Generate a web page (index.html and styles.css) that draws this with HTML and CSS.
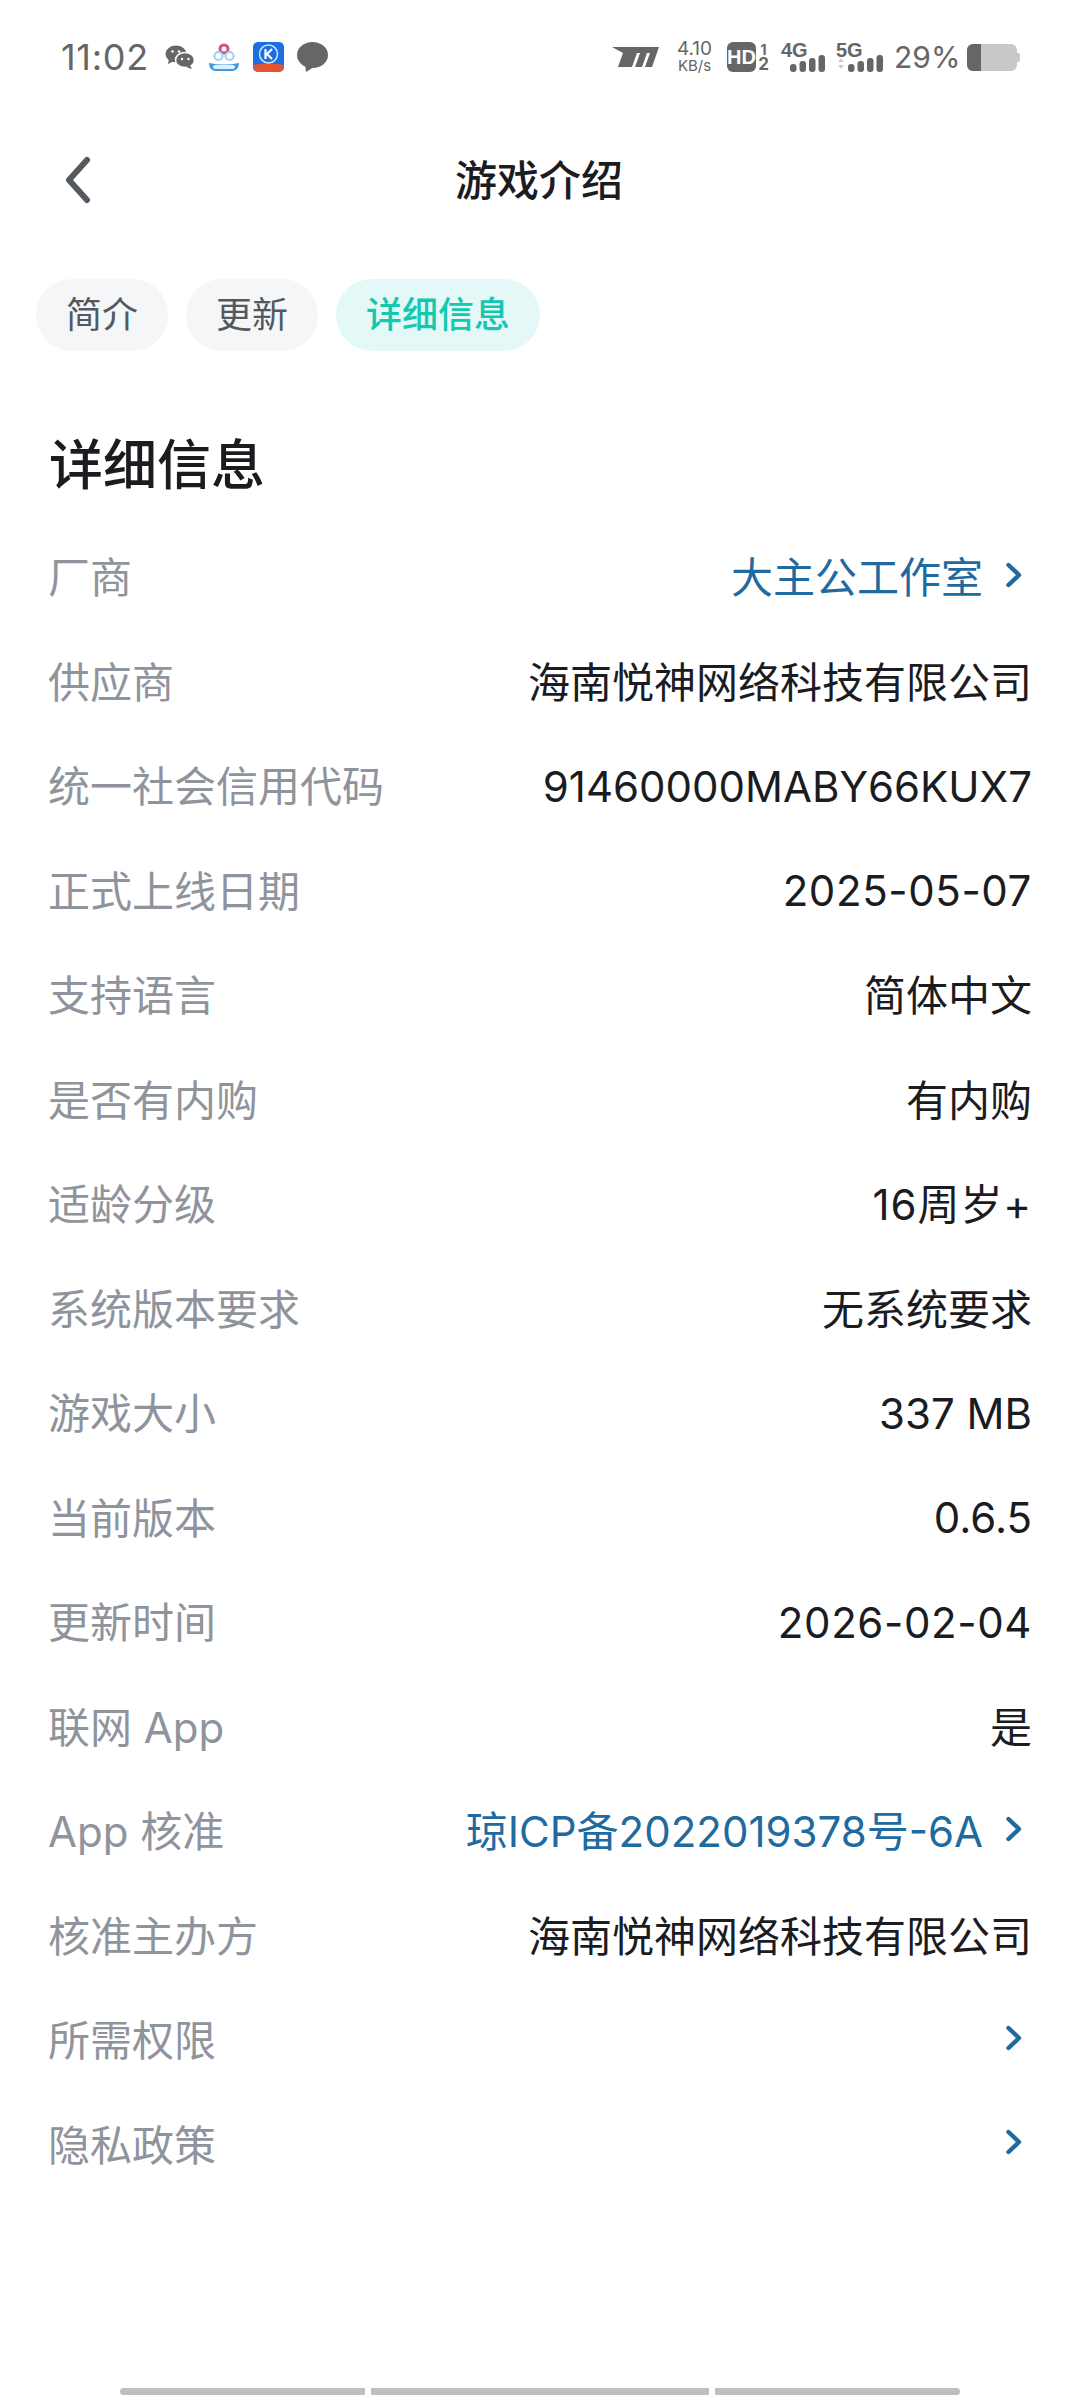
FILE: index.html
```html
<!DOCTYPE html>
<html lang="zh-CN">
<head>
<meta charset="utf-8">
<title>游戏介绍</title>
<link rel="stylesheet" href="styles.css">
</head>
<body>
<div class="screen">
  <div class="status">
    <div class="status-left">
      <span class="time">11:02</span>
      <svg class="ic-wechat" viewBox="0 0 30 24" width="30" height="24"><ellipse cx="11" cy="9" rx="10.500" ry="8.500" fill="#666"/><path d="M4 14l-1 5 6-3z" fill="#666"/><ellipse cx="20" cy="15" rx="9.500" ry="7.500" fill="#666" stroke="#fff" stroke-width="1.500"/><path d="M25 20l2 4-6-2z" fill="#666"/><circle cx="7.500" cy="6.500" r="1.300" fill="#fff"/><circle cx="14" cy="6.500" r="1.300" fill="#fff"/><circle cx="17" cy="14" r="1.200" fill="#fff"/><circle cx="23.500" cy="14" r="1.200" fill="#fff"/></svg>
      <svg class="ic-omni" viewBox="0 0 32 28" width="32" height="28"><circle cx="16" cy="6" r="4" fill="none" stroke="#d64a93" stroke-width="3"/><circle cx="10.500" cy="13" r="4" fill="none" stroke="#9cd3ee" stroke-width="2"/><circle cx="21.500" cy="13" r="4" fill="none" stroke="#9cd3ee" stroke-width="2"/><path d="M1 20q15 3 30 0c0 5-3 8-7 8H8c-4 0-7-3-7-8z" fill="#3b9be0"/><rect x="5" y="22" width="22" height="4" rx="2" fill="#dff0fb"/></svg>
      <svg class="ic-k" viewBox="0 0 31 30" width="31" height="30"><rect width="31" height="30" rx="5" fill="#1b6fe0"/><path d="M0 23q15.500 -3 31 0v2a5 5 0 0 1-5 5H5a5 5 0 0 1-5-5z" fill="#e2552f"/><circle cx="15.500" cy="12" r="9" fill="none" stroke="#cfe3fb" stroke-width="1.500"/><path d="M12.500 7v10M19 7l-5 5 5 5" fill="none" stroke="#fff" stroke-width="2.200"/></svg>
      <svg class="ic-bubble" viewBox="0 0 31 30" width="31" height="30"><ellipse cx="15.500" cy="13" rx="15.500" ry="13" fill="#666"/><path d="M8 22l1 8 8-5z" fill="#666"/></svg>
    </div>
    <div class="status-right">
      <svg class="ic-m" viewBox="0 0 47 20" width="47" height="20"><path d="M0 0h47l-7 20h-7l5-14h-3l-5 14h-7l5-14h-3l-5 14H6l5-14z" fill="#666"/></svg>
      <div class="speed"><span class="speed-num">4.10</span><span class="speed-unit">KB/s</span></div>
      <div class="hd"><span class="hd-box">HD</span><span class="hd-nums"><span>1</span><span class="hd-two">2</span></span></div>
      <div class="net net-4g">
        <span class="net-label">4G</span>
        <svg viewBox="0 0 35 17" width="35" height="17"><rect x="0" y="9" width="6.500" height="8" rx="3" fill="#666"/><rect x="9.500" y="6" width="6.500" height="11" rx="3" fill="#666"/><rect x="19" y="3" width="6.500" height="14" rx="3" fill="#666"/><rect x="28.500" y="0" width="6.500" height="17" rx="3" fill="#666"/></svg>
      </div>
      <div class="net net-5g">
        <span class="net-label">5G</span>
        <svg viewBox="0 0 45 17" width="45" height="17"><path d="M0 7l3-4 3 4zM0 10l3 4 3-4z" fill="#ccc"/><rect x="10" y="9" width="6.500" height="8" rx="3" fill="#666"/><rect x="19.500" y="6" width="6.500" height="11" rx="3" fill="#666"/><rect x="29" y="3" width="6.500" height="14" rx="3" fill="#666"/><rect x="38.500" y="0" width="6.500" height="17" rx="3" fill="#666"/></svg>
      </div>
      <span class="pct">29%</span>
      <svg class="ic-batt" viewBox="0 0 53 27" width="53" height="27"><path d="M49 9h2a2 2 0 0 1 2 2v5a2 2 0 0 1-2 2h-2z" fill="#c8c8c8"/><rect width="50" height="27" rx="6" fill="#c8c8c8"/><path d="M6 0h8v27H6a6 6 0 0 1-6-6V6a6 6 0 0 1 6-6z" fill="#666"/></svg>
    </div>
  </div>

  <header class="nav">
    <svg class="back" viewBox="0 0 30 48" width="30" height="48"><path d="M24 4L6 24l18 20" fill="none" stroke="#54585f" stroke-width="6" stroke-linecap="round" stroke-linejoin="round"/></svg>
    <h1 class="nav-title">游戏介绍</h1>
  </header>

  <div class="tabs">
    <span class="tab">简介</span>
    <span class="tab">更新</span>
    <span class="tab tab-active">详细信息</span>
  </div>

  <h2 class="heading">详细信息</h2>

  <div class="rows">
    <div class="row"><span class="label">厂商</span><span class="value link">大主公工作室<svg class="chev" viewBox="0 0 16 26" width="16" height="26"><path d="M2.500 3l10.500 10-10.500 10" /></svg></span></div>
    <div class="row"><span class="label">供应商</span><span class="value">海南悦神网络科技有限公司</span></div>
    <div class="row"><span class="label">统一社会信用代码</span><span class="value num">91460000MABY66KUX7</span></div>
    <div class="row"><span class="label">正式上线日期</span><span class="value num wide-date">2025-05-07</span></div>
    <div class="row"><span class="label">支持语言</span><span class="value">简体中文</span></div>
    <div class="row"><span class="label">是否有内购</span><span class="value">有内购</span></div>
    <div class="row"><span class="label">适龄分级</span><span class="value wide-age">16周岁+</span></div>
    <div class="row"><span class="label">系统版本要求</span><span class="value">无系统要求</span></div>
    <div class="row"><span class="label">游戏大小</span><span class="value num">337 MB</span></div>
    <div class="row"><span class="label">当前版本</span><span class="value num">0.6.5</span></div>
    <div class="row"><span class="label">更新时间</span><span class="value num wide-date">2026-02-04</span></div>
    <div class="row"><span class="label">联网 App</span><span class="value">是</span></div>
    <div class="row"><span class="label">App 核准</span><span class="value link">琼ICP备2022019378号-6A<svg class="chev" viewBox="0 0 16 26" width="16" height="26"><path d="M2.500 3l10.500 10-10.500 10" /></svg></span></div>
    <div class="row"><span class="label">核准主办方</span><span class="value">海南悦神网络科技有限公司</span></div>
    <div class="row"><span class="label">所需权限</span><span class="value link"><svg class="chev" viewBox="0 0 16 26" width="16" height="26"><path d="M2.500 3l10.500 10-10.500 10" /></svg></span></div>
    <div class="row"><span class="label">隐私政策</span><span class="value link"><svg class="chev" viewBox="0 0 16 26" width="16" height="26"><path d="M2.500 3l10.500 10-10.500 10" /></svg></span></div>
  </div>

  <div class="home-bars">
    <span class="bar bar-a"></span>
    <span class="bar bar-b"></span>
    <span class="bar bar-c"></span>
  </div>
</div>
</body>
</html>
```

FILE: styles.css
```css
* { box-sizing: border-box; }
html, body { margin: 0; padding: 0; background: #fff; }
body { font-family: Inter, "Noto Sans CJK SC", sans-serif; }
.screen { position: relative; width: 1080px; height: 2400px; overflow: hidden; background: #fff; }

.status { height: 113px; padding: 41px 60px 0 61px; display: flex; justify-content: space-between; align-items: flex-start; color: #666; }
.status-left, .status-right { display: flex; align-items: center; height: 32px; }
.time { font-size: 36px; line-height: 32px; width: 87px; letter-spacing: 0.7px; }
.ic-wechat { margin-left: 17px; }
.ic-omni { margin-left: 13px; }
.ic-k { margin-left: 13px; }
.ic-bubble { margin-left: 13px; }
.ic-m { margin-right: 17px; }
.speed { width: 37px; display: flex; flex-direction: column; align-items: center; line-height: 1; margin-right: 14px; }
.speed-num { font-size: 19px; line-height: 16px; }
.speed-unit { font-size: 15px; line-height: 14px; margin-top: 2px; }
.hd { display: flex; align-items: center; width: 55px; }
.hd-box { width: 29px; height: 30px; background: #666; color: #fff; border-radius: 6px; font-size: 20px; font-weight: 800; line-height: 30px; text-align: center; font-family: "Liberation Sans", sans-serif; }
.hd-nums { display: flex; flex-direction: column; align-items: center; width: 13px; margin-left: 1px; font-size: 14px; font-weight: 700; line-height: 15px; }
.hd-two { font-size: 17px; }
.net { position: relative; height: 30px; }
.net-4g { width: 43px; margin-right: 13px; }
.net-5g { width: 45px; margin-right: 11px; }
.net svg { position: absolute; right: 0; bottom: 0; }
.net-label { position: absolute; left: 0; top: 0; font-size: 20px; line-height: 16px; font-weight: 800; font-family: "Liberation Sans", sans-serif; }
.net-4g .net-label { left: -1px; }
.net-5g .net-label { left: -2px; }
.pct { font-size: 30px; line-height: 32px; width: 62px; }
.ic-batt { margin-left: 11px; }

.nav { height: 134px; display: flex; align-items: center; justify-content: center; padding-bottom: 5px; position: relative; }
.nav-title { margin: 0; font-size: 42px; font-weight: 500; color: #1b1c1f; transform: translateX(-1px); }
.back { position: absolute; left: 63px; top: 43px; }

.tabs { display: flex; gap: 18px; padding: 32px 0 0 36px; }
.tab { height: 72px; line-height: 72px; padding: 0 30px; border-radius: 36px; background: #f5f6f8; color: #54585f; font-size: 36px; }
.tab-active { background: #e4f9f7; color: #14c8b0; font-weight: 500; }

.heading { margin: 0; padding: 79px 0 0 49px; height: 171.5px; font-size: 54px; line-height: 72px; font-weight: 500; color: #1b1c1f; }

.rows { display: grid; grid-auto-rows: 104.5px; padding: 0 48px 0 48px; }
.row { display: flex; justify-content: space-between; align-items: center; font-size: 42px; }
.label { color: #8f949c; }
.value { color: #1b1c1f; display: flex; align-items: center; }
.num { padding-top: 5px; }
.wide-date { letter-spacing: 0.6px; }
.wide-age { letter-spacing: 0.9px; }
.link { color: #1f6a9f; }
.chev { margin-left: 23px; margin-right: 10px; }
.chev path { fill: none; stroke: #1f6a9f; stroke-width: 4.4; stroke-linecap: round; stroke-linejoin: round; }

.home-bars { position: absolute; left: 120px; top: 2388px; display: flex; gap: 6px; }
.bar { height: 7px; background: #bfbfbf; display: block; }
.bar-a { width: 245px; border-radius: 4px 0 0 4px; }
.bar-b { width: 338px; }
.bar-c { width: 245px; border-radius: 0 4px 4px 0; }
```
